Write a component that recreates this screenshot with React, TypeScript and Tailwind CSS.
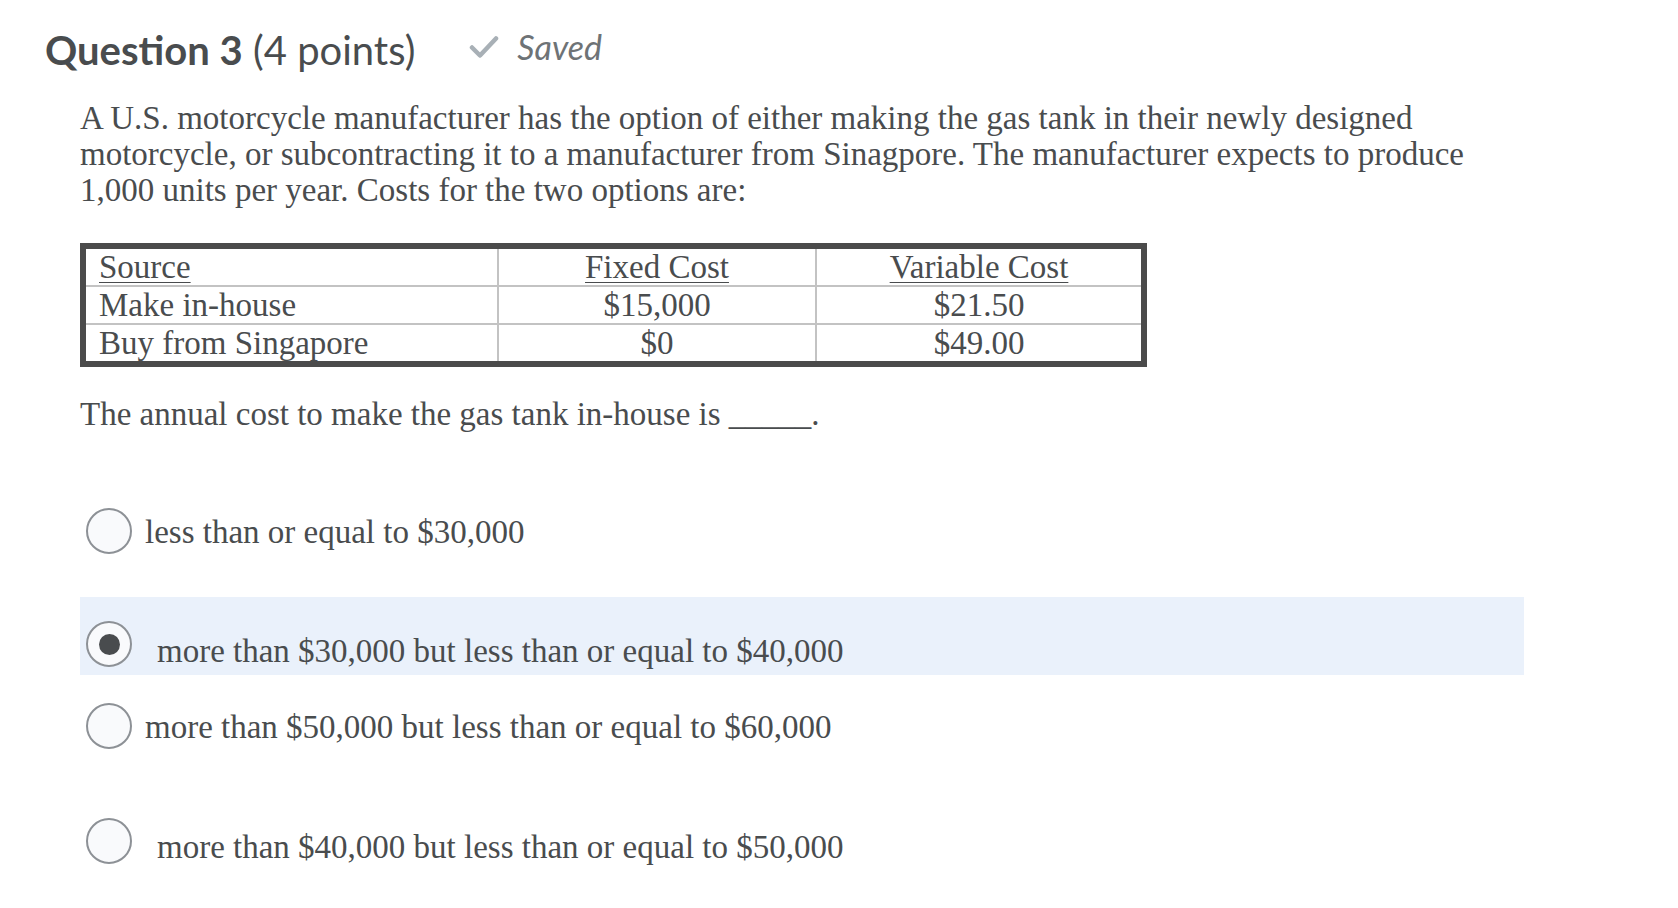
import React from "react";

function Radio({ checked }: { checked?: boolean }) {
  return (
    <span className="flex h-[46px] w-[46px] shrink-0 items-center justify-center rounded-full border-2 border-[#8d9196] bg-[#f9fafc]">
      {checked ? <span className="h-[21px] w-[21px] rounded-full bg-[#494c4e]" /> : null}
    </span>
  );
}

export default function App() {
  const serif = { fontFamily: '"Liberation Serif", "Times New Roman", serif' };
  return (
    <div className="min-h-[908px] w-full bg-white text-[#494c4e]">
      <div className="flex items-center pl-[45px] pt-[26px]" style={{ fontFamily: "Lato, sans-serif" }}>
        <h2 className="text-[40px] leading-[48px] font-normal">
          <span className="font-bold">Question 3</span> (4 points)
        </h2>
        <div className="ml-[54px] mb-[6px] flex items-center gap-[18px] text-[#6e7376]">
          <svg width="30" height="24" viewBox="0 0 30 24" fill="none">
            <path d="M3 12.5 L11 20.5 L27 3.5" stroke="#a8b0b6" strokeWidth="4.5" strokeLinecap="round" strokeLinejoin="round" />
          </svg>
          <span className="text-[34px] italic leading-[40px]">Saved</span>
        </div>
      </div>

      <div className="w-[1524px] pl-[80px]" style={serif}>
        <p className="mt-[26px] text-[33px] leading-[36px]">
          A U.S. motorcycle manufacturer has the option of either making the gas tank in their newly designed
          <br />
          motorcycle, or subcontracting it to a manufacturer from Sinagpore. The manufacturer expects to produce
          <br />
          1,000 units per year. Costs for the two options are:
        </p>

        <table className="mt-[35px] w-[1067px] border-collapse border-[6px] border-[#4b4b4b] text-[33px] leading-[34px]">
          <tbody>
            <tr className="border-b-2 border-[#c3c3c3]">
              <td className="w-[415px] border-r-2 border-[#c3c3c3] pl-[13px] py-[1px]"><span className="underline underline-offset-[4px] decoration-1">Source</span></td>
              <td className="w-[318px] border-r-2 border-[#c3c3c3] text-center py-[1px]"><span className="underline underline-offset-[4px] decoration-1">Fixed Cost</span></td>
              <td className="text-center py-[1px]"><span className="underline underline-offset-[4px] decoration-1">Variable Cost</span></td>
            </tr>
            <tr className="border-b-2 border-[#c3c3c3]">
              <td className="border-r-2 border-[#c3c3c3] pl-[13px] py-[1px]">Make in-house</td>
              <td className="border-r-2 border-[#c3c3c3] text-center py-[1px]">$15,000</td>
              <td className="text-center py-[1px]">$21.50</td>
            </tr>
            <tr>
              <td className="border-r-2 border-[#c3c3c3] pl-[13px] py-[1px]">Buy from Singapore</td>
              <td className="border-r-2 border-[#c3c3c3] text-center py-[1px]">$0</td>
              <td className="text-center py-[1px]">$49.00</td>
            </tr>
          </tbody>
        </table>

        <p className="mt-[29px] text-[33px] leading-[36px]">
          The annual cost to make the gas tank in-house is _____.
        </p>

        <div className="mt-[76px] flex flex-col text-[33px] leading-[36px]">
          <label className="flex items-start pl-[6px]">
            <Radio />
            <span className="ml-[13px] mt-[6px]">less than or equal to $30,000</span>
          </label>
          <label className="mt-[43px] flex h-[78px] items-start bg-[#eaf1fb] pl-[6px]">
            <span className="mt-[24px]">
              <Radio checked />
            </span>
            <span className="ml-[25px] mt-[36px]">more than $30,000 but less than or equal to $40,000</span>
          </label>
          <label className="mt-[28px] flex items-start pl-[6px]">
            <Radio />
            <span className="ml-[13px] mt-[6px]">more than $50,000 but less than or equal to $60,000</span>
          </label>
          <label className="mt-[69px] flex items-start pl-[6px]">
            <Radio />
            <span className="ml-[25px] mt-[11px]">more than $40,000 but less than or equal to $50,000</span>
          </label>
        </div>
      </div>
    </div>
  );
}
